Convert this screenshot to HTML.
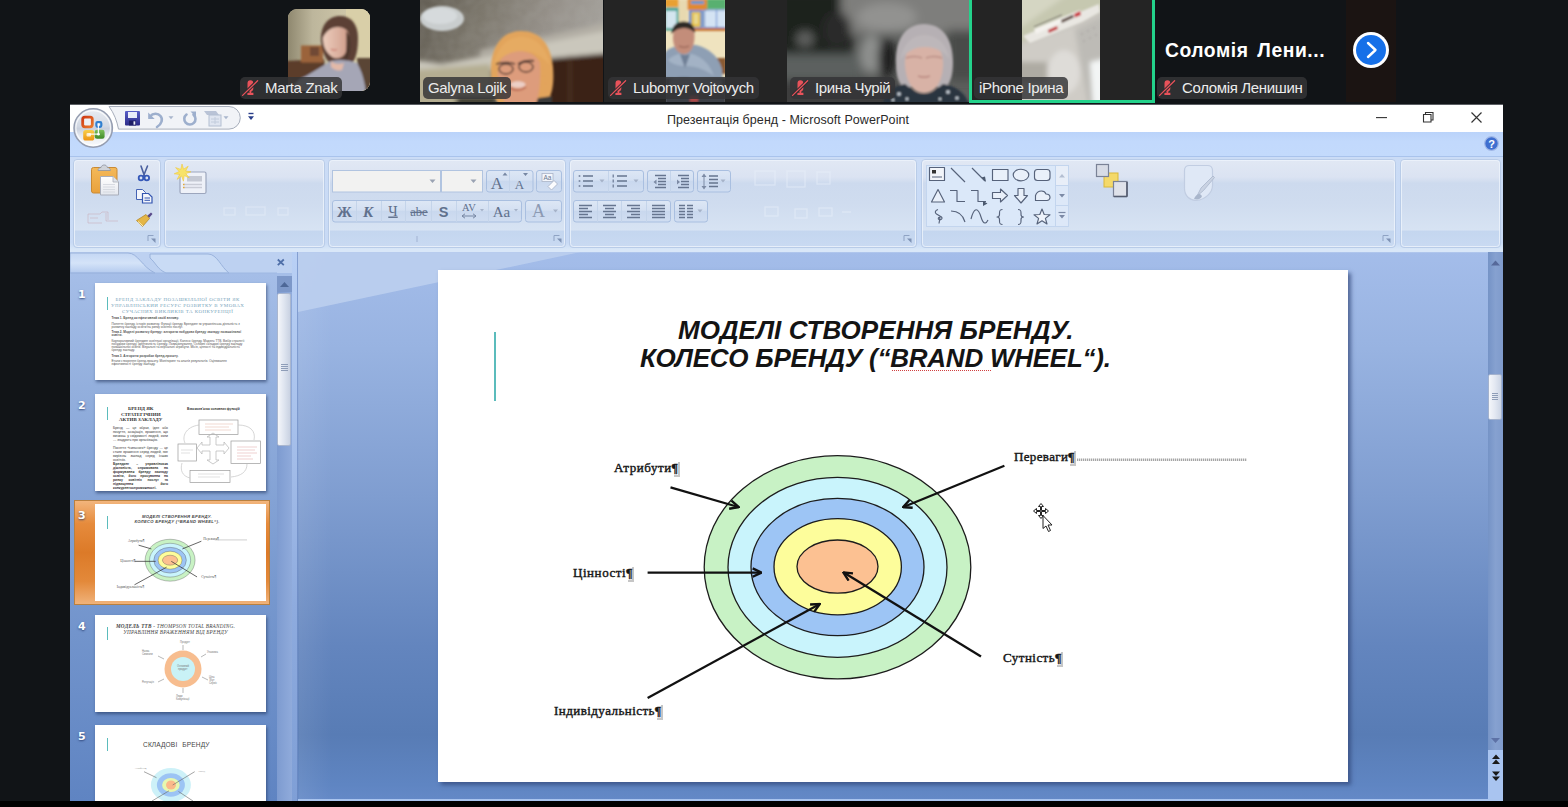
<!DOCTYPE html>
<html lang="uk">
<head>
<meta charset="utf-8">
<title>Презентація бренд - Microsoft PowerPoint</title>
<style>
*{box-sizing:border-box;margin:0;padding:0}
html,body{width:1568px;height:807px;overflow:hidden;background:#111417;font-family:"Liberation Sans","DejaVu Sans",sans-serif}
#root{position:relative;width:1568px;height:807px;overflow:hidden;background:#111417}
.abs{position:absolute}
/* ---------- zoom strip ---------- */
.tile{position:absolute;top:0;height:102px;overflow:hidden}
.lbl{position:absolute;height:22px;border-radius:5px;background:rgba(52,52,55,.84);color:#ececec;font-size:15px;line-height:22px;white-space:nowrap;padding:0 5px;font-family:"Liberation Sans",sans-serif;letter-spacing:-.35px}
.lbl svg{position:absolute;left:4px;top:2.700px;overflow:visible}
.lbl.m{padding-left:25px}
/* ---------- ppt window ---------- */
#ppt{position:absolute;left:70px;top:104px;width:1433px;height:697px;background:#bfd7f8;overflow:hidden}
#titlebar{position:absolute;left:0;top:0;width:100%;height:27.600px;background:#fff;border-top:1px solid #5b5e63}
#title{position:absolute;left:597px;top:8px;font-size:12.5px;line-height:14px;color:#2a2a2a;white-space:nowrap;letter-spacing:.07px}
#tabrow{position:absolute;left:0;top:27.600px;width:100%;height:25.400px;background:linear-gradient(#bad3fa,#c2d9fc 40%,#c3dafc);border-bottom:1px solid #a9c3ec}
#ribbon{position:absolute;left:0;top:53px;width:100%;height:95px;background:linear-gradient(#cbdcf6,#c8daf5 90%,#d6e5f7 96%,#dfebf9 100%)}
.grp{position:absolute;top:4px;height:87px;border:1px solid #b4c9e6;border-radius:4px;background:linear-gradient(#dbe7f7 0%,#d3e1f4 74%,#c1d6f2 76%,#c3d8f3 100%);box-shadow:0 0 0 1px rgba(255,255,255,.55) inset}

#work{position:absolute;left:0;top:146px;width:100%;height:551px;background:linear-gradient(90deg,rgba(255,255,255,0) 228px,rgba(255,255,255,.08) 229px,rgba(255,255,255,0) 262px),linear-gradient(#a4bdea 0%,#98b3e1 18%,#7f9dd0 45%,#6385be 72%,#587cb5 88%,#5f85c2 97%,#6489c7 100%);overflow:hidden}
#panel{position:absolute;left:0;top:0;width:222px;height:551px;background:linear-gradient(#a9c1ea 0%,#93afdd 25%,#7899cf 60%,#5f84c2 100%)}
.th{position:absolute;left:25px;width:170.500px;height:97px;background:#fff;box-shadow:1px 2px 3px rgba(30,50,90,.6);overflow:hidden}
.num{position:absolute;left:8px;width:14px;margin-top:-1px;color:#fff;font-weight:bold;font-size:11px;text-shadow:0 1px 2px rgba(30,50,100,.8);font-family:"DejaVu Sans","Liberation Sans",sans-serif}
.tt{position:absolute;white-space:nowrap;font-family:"Liberation Sans",sans-serif;transform-origin:0 0}
#slide{position:absolute;left:368px;top:166px;width:910px;height:512px;background:#fff;box-shadow:3px 3px 4px rgba(50,70,120,.7)}
.lab{position:absolute;font-family:"Liberation Serif",serif;font-size:13px;line-height:16px;color:#161616;white-space:nowrap;-webkit-text-stroke:.42px #161616;margin-top:.600px}
.lab i{font-style:normal;letter-spacing:0;box-shadow:2px 2px 0 -0px #c6c6c6}
.t1{position:absolute;white-space:nowrap;font-family:"Liberation Sans",sans-serif;font-weight:bold;font-style:italic;font-size:26px;line-height:30px;color:#141414}
.p1 p{margin:0 0 2px 0}
</style>
</head>
<body>
<div id="root">

<!-- ================= ZOOM VIDEO STRIP ================= -->
<div id="strip">
<svg width="0" height="0" style="position:absolute"><defs>
<filter id="b1" x="-20%" y="-20%" width="140%" height="140%"><feGaussianBlur stdDeviation="1.2"/></filter>
<filter id="b2" x="-20%" y="-20%" width="140%" height="140%"><feGaussianBlur stdDeviation="2.5"/></filter>
<filter id="b4" x="-20%" y="-20%" width="140%" height="140%"><feGaussianBlur stdDeviation="5"/></filter>
<symbol id="mic" viewBox="0 0 16 16" overflow="visible"><path d="M3.500 3.200a2.900 2.900 0 0 1 5.800 0v5.300c0 1.700-1.100 2.700-2.100 3v1.300h2.200v2.100h-6v-2.100h2.200v-1.300c-1-.3-2.100-1.300-2.100-3z" fill="#e8525a"/><path d="M13.600 .800-1.400 15.400" stroke="#2d2d30" stroke-width="3.200"/><path d="M13.600 .800-1.400 15.400" stroke="#e8525a" stroke-width="1.300" stroke-linecap="round"/></symbol>
</defs></svg>

<!-- tile 1 : Marta Znak (avatar) -->
<div class="abs" style="left:288px;top:9px;width:82px;height:82px;border-radius:9px;overflow:hidden;background:#c5bea3">
<svg width="82" height="82" viewBox="0 0 82 82">
 <defs><linearGradient id="w1" x1="0" y1="0" x2="1" y2="0"><stop offset="0" stop-color="#8f886f"/><stop offset=".3" stop-color="#bdb69c"/><stop offset=".7" stop-color="#cdc5a8"/><stop offset="1" stop-color="#d8cea8"/></linearGradient>
 <linearGradient id="sk1" x1="0" y1="0" x2="1" y2="0"><stop offset="0" stop-color="#eccdbd"/><stop offset="1" stop-color="#cf9c8a"/></linearGradient></defs>
 <rect width="82" height="82" fill="url(#w1)"/>
 <rect x="58" y="0" width="24" height="60" fill="#d9cfa8"/>
 <g filter="url(#b1)">
 <path d="M-2 52L36 50 40 84H-2z" fill="#5b3d2b"/>
 <rect x="13" y="36.500" width="22" height="17" fill="#9b633a"/>
 <rect x="22" y="38" width="9" height="9" fill="#6f4a36"/>
 <path d="M69 49h15v35H72z" fill="#5a4535"/>
 <path d="M33 32c-1-15 7-25 19-25 11 0 18 8 18 22 0 12-2 22-7 26-6 3-14 2-20 0-6-5-9-13-10-23z" fill="#5b4136"/>
 <path d="M35 30c0-8 5-14 13-15 7 0 13 5 13 14 0 8-2 14-6 18-4 3-9 3-12 0-5-4-8-10-8-17z" fill="url(#sk1)"/>
 <path d="M34 30c1-10 7-17 16-17 8 0 13 5 14 14-4-6-9-9-14-9-7 0-12 4-16 12z" fill="#5b4136"/>
 <path d="M58 22c4 4 5 12 4 20-1 6-3 10-6 12 2-8 3-18 2-32z" fill="#4e372e"/>
 <path d="M3 84c3-10 8-14 15-17l25-15c8-2 18-1 26 2 5 8 8 20 9 30z" fill="#a5a6b6"/>
 <path d="M43 52c3 3 8 4 13 2l-2 7c-4 1-8 0-11-3z" fill="#e2b9a8"/>
 <path d="M43 40c2 1.500 4 1.500 6 .500" stroke="#c9776a" stroke-width="1.200" fill="none"/>
 </g>
</svg></div>
<div class="lbl m" style="left:240px;top:77.400px"><svg width="16" height="16"><use href="#mic"/></svg>Marta Znak</div>

<!-- tile 2 : Galyna Lojik -->
<div class="tile" style="left:420px;width:183px;background:#8a857c">
<svg width="183" height="102" viewBox="0 0 183 102">
 <defs><linearGradient id="c2" x1="0" y1="0" x2="1" y2=".25"><stop offset="0" stop-color="#625d53"/><stop offset=".35" stop-color="#7d786d"/><stop offset=".7" stop-color="#96918a"/><stop offset="1" stop-color="#a5a29c"/></linearGradient>
 <filter id="tx" x="0" y="0" width="100%" height="100%"><feTurbulence type="fractalNoise" baseFrequency=".09" numOctaves="2" seed="3"/><feColorMatrix values="0 0 0 0 .5  0 0 0 0 .5  0 0 0 0 .48  .9 0 0 0 -.28"/></filter></defs>
 <rect width="183" height="102" fill="url(#c2)"/>
 <rect width="183" height="70" filter="url(#tx)" opacity=".28"/>
 <g filter="url(#b2)">
 <path d="M-5 60 L22 64 L70 55 L190 25 L190 55 L120 60 L60 72 L-5 74z" fill="#cac7bc"/>
 <path d="M60 50 L190 22 L190 30 L60 56z" fill="#b3afa5"/>
 <path d="M-5 70 L70 64 L75 110 L-5 110z" fill="#b4ad91"/>
 <path d="M122 59 L190 53 L190 110 L122 110z" fill="#3a2417"/>
 <path d="M150 56v50" stroke="#4d3322" stroke-width="3"/>
 <rect x="36" y="97" width="40" height="8" fill="#1d1a18"/>
 </g>
 <g filter="url(#b1)">
 <ellipse cx="22" cy="18.500" rx="22" ry="12.500" fill="#c9cdce"/>
 <ellipse cx="20" cy="16" rx="17" ry="8" fill="#d6dadc"/>
 <path d="M71 74c-1-26 10-43 30-43 19 0 30 13 32 36 1 14 0 26-5 33l-8 6H80c-6-8-9-18-9-32z" fill="#e2a45c"/>
 <path d="M78 68c1-10 8-16 20-17 13 0 22 6 24 18 1 12-1 24-7 36H86c-6-10-9-24-8-37z" fill="#dd9c7b"/>
 <path d="M73 66c4-18 14-29 28-29 14 0 25 9 29 28-8-9-17-14-28-14-11 0-21 5-29 15z" fill="#e6ab62"/>
 <path d="M120 62c5 8 7 22 5 36l-8 4c3-12 4-26 3-40z" fill="#e2a45c"/>
 <path d="M76 64c8-2 14-2 19 0M98 64c5-3 10-4 16-3" stroke="#4d3732" stroke-width="1.800" fill="none"/>
 <ellipse cx="86" cy="69" rx="7" ry="5" fill="none" stroke="#4d3732" stroke-width="1.400"/><ellipse cx="106" cy="67" rx="7" ry="5" fill="none" stroke="#4d3732" stroke-width="1.400"/>
 <ellipse cx="98" cy="84.500" rx="7.500" ry="3.200" fill="#eccfc6"/>
 <path d="M90 88c5 3 11 3 16-1" stroke="#b4604e" stroke-width="1.600" fill="none"/>
 <path d="M118 98l14-2v8h-16z" fill="#3a3a3a"/>
 </g>
</svg></div>
<div class="lbl" style="left:423px;top:77.400px">Galyna Lojik</div>

<!-- tile 3 : Lubomyr Vojtovych -->
<div class="tile" style="left:604px;width:183px;background:#242424">
<svg class="abs" style="left:62px;top:0" width="59" height="102" viewBox="0 0 59 102">
 <rect width="59" height="102" fill="#efe3bf"/>
 <g filter="url(#b1)">
 <rect x="12.500" y="0" width="9" height="32" fill="#e8d9b0"/>
 <rect x="-1" y="-1" width="13.500" height="8" fill="#e8a030"/>
 <rect x="-1" y="7.500" width="13.500" height="23" fill="#4aa69a"/><rect x="0" y="11" width="10.500" height="17" fill="#d3e5ee"/>
 <rect x="21.500" y="-1" width="20" height="11" fill="#e08a30"/><rect x="25" y="1" width="13" height="3" fill="#5a9ad0"/>
 <rect x="23" y="10" width="14" height="20" fill="#6a8ed0"/><rect x="25.500" y="12" width="9" height="15" fill="#e6c24a"/><rect x="28" y="14" width="4" height="10" fill="#e8d890"/>
 <rect x="41" y="-1" width="19" height="10" fill="#58b070"/>
 <rect x="37.700" y="9.500" width="22" height="19" fill="#4a80d0"/><rect x="39" y="10.500" width="11" height="16.500" fill="#d4e3f3"/><rect x="51" y="10.500" width="9" height="16.500" fill="#d4e3f3"/>
 <rect x="21" y="28" width="40" height="3" fill="#c8793a"/>
 <rect x="50" y="58" width="10" height="16" fill="#8a5a30"/>
 <path d="M-2 104V54c3-5 8-7 14-8l6-1h12c12 3 22 10 26 24l2 35z" fill="#8e9fb4"/>
 <path d="M2 60c6-6 14-8 24-6 10 3 18 10 22 22-8-6-18-10-28-10-8 0-14-2-18-6z" fill="#a3b2c5"/>
 <path d="M7 38c0-10 4-16 11-16s11 6 10.500 16c-.5 9-4 16-10.500 16s-11-7-11-16z" fill="#c38d7a"/>
 <path d="M5.500 34c0-8 5-12.500 12-12.500s11.500 4 11.500 11.500c-3-3.500-7-5-11.500-5s-9 2-12 6z" fill="#2f2a26"/>
 <path d="M14 54l5 14 5-14c-3 1-7 1-10 0z" fill="#6f7f95"/>
 <path d="M13 46c3 1.500 7 1.500 10 0" stroke="#8d5a4e" stroke-width="1.200" fill="none"/>
 <rect x="-1" y="78" width="61" height="26" fill="#3d4046"/>
 <path d="M4 80c6-3 14-4 22-2l30 2v6H4z" fill="#6a788a"/>
 <rect x="24" y="96" width="8" height="6" fill="#b04a48"/>
 </g>
</svg></div>
<div class="lbl m" style="left:608px;top:77.400px"><svg width="16" height="16"><use href="#mic"/></svg>Lubomyr Vojtovych</div>

<!-- tile 4 : Ірина Чурій -->
<div class="tile" style="left:787px;width:183px;background:#4a4b49">
<svg width="183" height="102" viewBox="0 0 183 102">
 <rect width="183" height="102" fill="#5c5e5c"/>
 <g filter="url(#b4)">
 <rect x="-10" y="-10" width="76" height="66" fill="#1f211f"/>
 <rect x="54" y="-10" width="140" height="44" fill="#7e7e7c"/>
 <ellipse cx="100" cy="17" rx="30" ry="14" fill="#929290"/>
 <ellipse cx="18" cy="39" rx="9" ry="8" fill="#5e605e"/>
 <rect x="-10" y="54" width="84" height="26" fill="#5c605e"/>
 <ellipse cx="84" cy="54" rx="11" ry="19" fill="#8e908e"/>
 <ellipse cx="100" cy="58" rx="9" ry="20" fill="#1c1e1c"/>
 <rect x="160" y="30" width="30" height="50" fill="#4a4c48"/>
 <rect x="-10" y="80" width="120" height="30" fill="#3c3e3c"/>
 <ellipse cx="50" cy="30" rx="14" ry="18" fill="#2a2c2a"/>
 </g>
 <g filter="url(#b1)">
 <path d="M109 64c-1-24 9-40 28-40 18 0 29 14 29 38 0 12-2 20-7 25h-43c-5-5-7-13-7-23z" fill="#b6b0b4"/>
 <path d="M118 62c0-12 7-20 19-20 11 0 19 7 19 21 0 16-6 30-19 30s-19-15-19-31z" fill="#d8b2a6"/>
 <path d="M113 60c3-16 12-25 24-25 13 0 22 8 26 24-7-8-15-12-25-12-10 0-18 4-25 13z" fill="#bdb7ba"/>
 <path d="M119 58c6-2 11-2 16 0M139 58c5-2 10-2 16 0" stroke="#b98d84" stroke-width="1.600" fill="none"/>
 <path d="M131 76c4 1.500 8 1.500 12 0" stroke="#b07a74" stroke-width="1.300" fill="none"/>
 <path d="M96 104c2-12 10-18 22-20l10 8c6 3 12 3 18 0l10-8c12 2 22 8 26 20z" fill="#2a3440"/>
 <g fill="#d5dde4"><circle cx="112" cy="94" r="1.800"/><circle cx="120" cy="99" r="1.400"/><circle cx="161" cy="92" r="1.800"/><circle cx="170" cy="98" r="1.600"/><circle cx="153" cy="99" r="1.300"/><circle cx="106" cy="100" r="1.300"/></g>
 </g>
</svg></div>
<div class="lbl m" style="left:790px;top:77.400px"><svg width="16" height="16"><use href="#mic"/></svg>Ірина Чурій</div>

<!-- tile 5 : iPhone Ірина (active speaker) -->
<div class="tile" style="left:969px;width:186px;background:#242424;border:3.500px solid #23d28b;border-top-width:0;height:103px">
<svg class="abs" style="left:49.800px;top:0" width="78" height="100" viewBox="0 0 78 100">
 <rect width="78" height="100" fill="#c9c6c0"/>
 <g filter="url(#b2)">
 <path d="M-5 -5h90v12L-5 44z" fill="#c6c8b0"/>
 <path d="M-5 -5h50L-5 30z" fill="#d5d6c3"/>
 <path d="M50 32 L85 14 L85 105 L66 105z" fill="#bdbbb6"/>
 <path d="M-5 46 L52 26 L66 105 L-5 105z" fill="#cfccc6"/>
 <ellipse cx="42" cy="72" rx="16" ry="22" fill="#dedcd8"/>
 <path d="M-5 62h30v20H-5z" fill="#aeaba3"/>
 <path d="M68 62l17-4v50H71z" fill="#f3f5f5"/>
 </g>
 <g filter="url(#b1)">
 <path d="M1 36 L77 4 L78 12 L60 22 L8 43z" fill="#e9e7e2"/>
 <path d="M12 29 L58 10 L59 14 L14 34z" fill="#f4f2ee"/>
 <path d="M26 30l9-4 .800 3-9 4z" fill="#c23038"/><path d="M52 14l6-3 1 4-6 2.500z" fill="#c8303a"/>
 <path d="M39 20l12-5.500 .800 3-12 5.500z" fill="#5d4a40"/>
 <path d="M12 27l28-12" stroke="#6a6660" stroke-width="1"/>
 <g fill="#aaa8a4"><circle cx="60" cy="34" r=".9"/><circle cx="66" cy="31" r=".9"/><circle cx="72" cy="28" r=".9"/><circle cx="62" cy="41" r=".9"/><circle cx="68" cy="38" r=".9"/><circle cx="74" cy="35" r=".9"/></g>
 </g>
</svg></div>
<div class="lbl" style="left:974px;top:77.400px">iPhone Ірина</div>

<!-- tile 6 : Соломія Ленишин (no video) -->
<div class="abs" style="left:1165px;top:37.500px;width:180px;height:26px;color:#fff;font-weight:bold;font-size:19.3px;line-height:26px;white-space:nowrap;font-family:'Liberation Sans',sans-serif;letter-spacing:.55px;word-spacing:3px">Соломія Лени...</div>
<div class="lbl m" style="left:1157px;top:77.400px"><svg width="16" height="16"><use href="#mic"/></svg>Соломія Ленишин</div>
<div class="abs" style="left:1346px;top:0;width:50px;height:102px;background:#1b1412"></div>
<div class="abs" style="left:1353px;top:32px;width:36px;height:36px;border-radius:50%;background:#fff"></div>
<div class="abs" style="left:1356px;top:35px;width:30px;height:30px;border-radius:50%;background:#1670e8"></div>
<svg class="abs" style="left:1356px;top:35px" width="30" height="30" viewBox="0 0 30 30"><path d="M12 8l7.5 7-7.5 7" fill="none" stroke="#fff" stroke-width="2.4" stroke-linecap="round" stroke-linejoin="round"/></svg>
</div>

<!-- ================= POWERPOINT ================= -->
<div id="ppt">
  <div id="titlebar"><div id="title">Презентація бренд - Microsoft PowerPoint</div></div>
  <div id="tabrow"></div>
  <div id="ribbon"></div>
  <div id="work">
    <!-- diagonal light wedge at top of workspace -->
    <svg class="abs" style="left:0;top:0" width="1433" height="120" viewBox="0 0 1433 120"><path d="M228 0H520L228 62z" fill="#bdd0ef" opacity=".85"/><path d="M228 0h1205v3H228z" fill="#b7cbee" opacity=".6"/></svg>
    <!-- ===== slide thumbnails panel ===== -->
    <div id="panel">
      <svg class="abs" style="left:0;top:0" width="222" height="30" viewBox="0 0 222 30">
        <defs><linearGradient id="tb1" x1="0" y1="0" x2="0" y2="1"><stop offset="0" stop-color="#c4d7f4"/><stop offset=".5" stop-color="#d4e3f8"/><stop offset="1" stop-color="#b4caee"/></linearGradient></defs>
        <rect x="0" y="0" width="222" height="23" fill="#bdd1f1"/>
        <path d="M0 3h58c10 0 14 14 27 20H0z" fill="url(#tb1)" stroke="#8fa9d6" stroke-width=".8"/>
        <path d="M80 4h58c9 0 13 13 21 19H96c-9-4-10-10-16-15z" fill="#c9dbf5" stroke="#8fa9d6" stroke-width=".8"/>
        <path d="M0 23h207" stroke="#9fb8e2" stroke-width="1"/>
        <path d="M207.800 9.500l6 5.600M213.800 9.500l-6 5.600" stroke="#4f6fa8" stroke-width="1.800"/>
      </svg>
      <!-- panel scrollbar -->
      <div class="abs" style="left:207px;top:26px;width:15px;height:525px;background:linear-gradient(90deg,#7d9bd0,#90abdb)"></div>
      <div class="abs" style="left:207px;top:26px;width:15px;height:16px;background:#7d98c9"></div>
      <svg class="abs" style="left:207px;top:26px" width="15" height="16"><path d="M3 11h9l-4.500-5z" fill="#4d6797"/></svg>
      <div class="abs" style="left:207px;top:43px;width:14px;height:153px;border-radius:2px;background:linear-gradient(90deg,#f4f6fa,#dfe5f0 50%,#c9d2e2);border:1px solid #a9b6cf"></div>
      <svg class="abs" style="left:208px;top:113px" width="13" height="10"><path d="M3 1.500h7M3 3.500h7M3 5.500h7M3 7.500h7" stroke="#8e9db8" stroke-width="1"/></svg>

      <div class="num" style="top:39px">1</div>
      <div class="th" style="top:33px">
        <div class="abs" style="left:12px;top:14px;width:1px;height:13px;background:#5bbcbc"></div>
        <div class="tt" style="left:16px;top:14px;font-size:5px;line-height:6px;color:#7aa6bc;letter-spacing:.45px;text-align:center;font-family:'Liberation Serif',serif">БРЕНД ЗАКЛАДУ ПОЗАШКІЛЬНОЇ ОСВІТИ ЯК<br>УПРАВЛІНСЬКИЙ РЕСУРС РОЗВИТКУ В УМОВАХ<br>СУЧАСНИХ ВИКЛИКІВ ТА КОНКУРЕНЦІЇ</div>
        <div class="tt p1" style="left:16.500px;top:34.300px;font-size:3.150px;line-height:3.250px;color:#555;width:133px;white-space:normal;font-family:'Liberation Sans',sans-serif"><p><b>Тема 1. Бренд як ефективний засіб впливу.</b></p><p>Поняття бренду, історія розвитку. Функції бренду. Брендинг як управлінська діяльність з розвитку закладу освіти на ринку освітніх послуг.</p><p><b>Тема 2. Моделі розвитку бренду: алгоритм побудови бренду закладу позашкільної освіти.</b></p><p>Корпоративний брендинг освітньої організації. Колесо бренду. Модель ТТВ. Вибір стратегії побудови бренду. Ідентичність бренду. Позиціонування. Основні складові бренду закладу позашкільної освіти. Візуальні та вербальні атрибути. Місія, цінності та індивідуальність бренду закладу.</p><p><b>Тема 3. Алгоритм розробки бренд-проєкту.</b></p><p>Етапи створення бренд-проєкту. Моніторинг та аналіз результатів. Оцінювання ефективності бренду закладу.</p></div>
      </div>

      <div class="num" style="top:150px">2</div>
      <div class="th" style="top:144px">
        <div class="abs" style="left:12px;top:13px;width:1px;height:13px;background:#5bbcbc"></div>
        <div class="tt" style="left:24px;top:12px;font-size:5px;line-height:5.500px;color:#333;font-weight:bold;text-align:center;font-family:'Liberation Serif',serif">БРЕНД ЯК<br>СТРАТЕГІЧНИЙ<br>АКТИВ ЗАКЛАДУ</div>
        <div class="tt" style="left:92px;top:13px;font-size:3.200px;color:#333;font-weight:bold">Взаємозв’язок основних функцій</div>
        <div class="tt" style="left:18px;top:32px;font-size:3.400px;line-height:4px;color:#333;width:55px;white-space:normal;text-align:justify">Бренд — це образ, ідея або почуття, асоціація, враження, що виникає у свідомості людей, коли … згадують про організацію.<br><br>Поняття «сильного» бренду … це стале враження серед людей, яке вирізняє заклад серед інших освітніх.<br><b>Брендинг – управлінська діяльність, спрямована на формування бренду закладу освіти, його просування на ринку освітніх послуг та підвищення його конкурентоспроможності.</b></div>
        <svg class="abs" style="left:0;top:0" width="171" height="97" viewBox="0 0 171 97" fill="none" stroke="#9a9a9a" stroke-width=".7">
          <rect x="104" y="26" width="39" height="14.500" fill="#fff"/><rect x="83" y="50" width="18.500" height="17" fill="#fff"/><rect x="136" y="47" width="29.500" height="22.500" fill="#fff"/><rect x="95" y="76.500" width="40" height="12" fill="#fff"/>
          <path d="M112 43l6-4 6 4h-3v8h8v-3l5 6-5 6v-3h-8v9h3l-6 4-6-4h3v-9h-8v3l-5-6 5-6v3h8v-8z" stroke="#b5b5b5"/>
          <path d="M104 31c-14 2-17 12-14 18M143 31c12 0 18 6 16 15M152 70c0 8-6 12-16 13M95 84c-8-2-10-8-8-15" stroke="#c4c4c4"/>
          <path d="M110 30h28M110 33h24M110 36h26" stroke="#e0b0a0" stroke-width=".5"/><path d="M142 53h20M142 56h18M142 59h20M142 62h14M142 65h16" stroke="#dca0a0" stroke-width=".5"/><path d="M103 80h26M103 83h22" stroke="#c0c0c0" stroke-width=".5"/><path d="M86 56h12M86 59h9" stroke="#c0c0c0" stroke-width=".5"/>
        </svg>
      </div>

      <!-- selected thumbnail #3 -->
      <div class="abs" style="left:4px;top:250px;width:196px;height:105px;border:1px solid #b9803f;background:linear-gradient(#f2b57c 0%,#e68b3c 22%,#dc7a28 50%,#e3893a 78%,#f0b27a 100%)"></div>
      <div class="num" style="top:260px">3</div>
      <div class="th" style="top:254px;box-shadow:none">
        <div class="abs" style="left:12px;top:12px;width:1px;height:13px;background:#5bbcbc"></div>
        <div class="tt" style="left:39.500px;top:9.800px;font-size:4.150px;line-height:5.400px;color:#444;font-weight:bold;font-style:italic;text-align:center;letter-spacing:.3px">МОДЕЛІ СТВОРЕННЯ БРЕНДУ.<br>КОЛЕСО БРЕНДУ (“BRAND WHEEL“).</div>
        <svg class="abs" style="left:0;top:0" width="171" height="97" viewBox="438 270 910 512">
          <g stroke="#555" stroke-width="2"><ellipse cx="837.500" cy="567" rx="133" ry="111.500" fill="#c8f2c4"/><ellipse cx="837.500" cy="567" rx="109.500" ry="90" fill="#c9f4fc"/><ellipse cx="837.500" cy="567" rx="86.500" ry="68.500" fill="#9cc4f4"/><ellipse cx="837.500" cy="567" rx="63.500" ry="48" fill="#fdfd9a"/><ellipse cx="837.500" cy="567" rx="40.500" ry="26.500" fill="#fcc090"/></g>
          <g stroke="#333" stroke-width="4"><path d="M670 487l68 20M648 573h113M648 698l171-94M1004 466l-101 41M981 656l-137-83"/></g>
          <path d="M1075 459h172" stroke="#aaa" stroke-width="3"/>
          <g fill="#555" font-family="Liberation Serif, serif" font-size="19"><text x="614" y="472">Атрибути¶</text><text x="1014" y="461">Переваги¶</text><text x="573" y="577">Цінності¶</text><text x="1003" y="662">Сутність¶</text><text x="554" y="715">Індивідуальність¶</text></g>
        </svg>
      </div>

      <div class="num" style="top:371px">4</div>
      <div class="th" style="top:365px">
        <div class="abs" style="left:12px;top:12px;width:1px;height:13px;background:#5bbcbc"></div>
        <div class="tt" style="left:21px;top:9px;font-size:5.200px;line-height:5.600px;color:#444;font-style:italic;text-align:center;letter-spacing:.25px;font-family:'Liberation Serif',serif"><b>МОДЕЛЬ ТТВ</b> - THOMPSON TOTAL BRANDING.<br>УПРАВЛІННЯ ВРАЖЕННЯМ ВІД БРЕНДУ</div>
        <svg class="abs" style="left:45px;top:21px" width="90" height="68" viewBox="0 0 90 68">
          <circle cx="43" cy="33" r="18.500" fill="#f7bd8f"/><circle cx="43" cy="33" r="12" fill="#c9f2f6"/>
          <g stroke="#888" stroke-width=".6"><path d="M43 9v5M66 18l-5 3M68 44l-6-3M43 57v-5M18 46l6-3M18 20l6 3"/></g>
          <g fill="#777" font-family="Liberation Sans, sans-serif" font-size="2.600"><text x="40" y="7">Продукт</text><text x="67" y="17">Упаковка</text><text x="69" y="42">Ціна</text><text x="69" y="45">Збут</text><text x="69" y="48">Сервіс</text><text x="36" y="61">Люди</text><text x="36" y="64">Комунікації</text><text x="2" y="47">Репутація</text><text x="2" y="16">Назва</text><text x="2" y="19">Символи</text><text x="37" y="31">Основний</text><text x="38" y="34">продукт</text></g>
        </svg>
      </div>

      <div class="num" style="top:481px">5</div>
      <div class="th" style="top:475px">
        <div class="abs" style="left:11.500px;top:12.500px;width:1px;height:13.500px;background:#5bbcbc"></div>
        <div class="tt" style="left:48px;top:15.500px;font-size:6.600px;line-height:8px;color:#444;letter-spacing:.12px;word-spacing:3px">СКЛАДОВІ БРЕНДУ</div>
        <svg class="abs" style="left:0;top:0" width="171" height="97" viewBox="0 0 171 97">
          <ellipse cx="75.900" cy="60" rx="20" ry="17" fill="#cdf1f8"/><ellipse cx="75.900" cy="60" rx="14" ry="11.700" fill="#9cc4f4"/><ellipse cx="75.900" cy="60" rx="8.800" ry="7" fill="#e6f8b0"/><ellipse cx="76" cy="60" rx="5" ry="4.600" fill="#fbb98a"/>
          <g stroke="#666" stroke-width=".6"><path d="M49 46.700l12.500 6M99.700 46.700l-22 13.300M57 76l17-10.200M98 76l-14.500-9.500"/></g>
          <g fill="#888" font-family="Liberation Serif, serif" font-size="2.600"><text x="39.500" y="43.500">Атрибути¶</text><text x="103.400" y="46.500">Бренд</text></g>
        </svg>
      </div>
    </div>
    <!-- splitter -->
    <div class="abs" style="left:222px;top:2px;width:6px;height:549px;background:linear-gradient(#b9d0f5 0%,#a9c2ec 30%,#8eabde 65%,#7f9fd6 100%);border-right:1px solid rgba(90,120,180,.55)"></div>

    <!-- ===== main slide ===== -->
    <div id="slide" style="top:20px">
      <div class="abs" style="left:56px;top:62px;width:2px;height:69px;background:#5bbcbc"></div>
      <div class="t1" style="left:240px;top:45px;letter-spacing:.05px">МОДЕЛІ СТВОРЕННЯ БРЕНДУ.</div>
      <div class="t1" style="left:202px;top:73px;letter-spacing:-.24px">КОЛЕСО БРЕНДУ (“BRAND WHEEL“).</div>
      <div class="abs" style="left:454px;top:100px;width:99px;height:0;border-top:1px dotted #d04040"></div>
      <svg class="abs" style="left:0;top:0" width="910" height="512" viewBox="438 270 910 512">
        <g stroke="#1c1c1c" stroke-width="1.300">
          <ellipse cx="837.500" cy="567.300" rx="133.300" ry="111.600" fill="#c8f2c5"/>
          <ellipse cx="837.500" cy="567.300" rx="109.500" ry="90" fill="#c9f4fc"/>
          <ellipse cx="837.500" cy="567" rx="86.500" ry="68.700" fill="#9dc5f5"/>
          <ellipse cx="837.700" cy="566.800" rx="63.700" ry="48.100" fill="#fdfd9b"/>
          <ellipse cx="837.500" cy="566.600" rx="40.500" ry="26.600" fill="#fcc192"/>
        </g>
        <defs><marker id="ah" viewBox="0 0 12 12" refX="10.500" refY="6" markerWidth="10.500" markerHeight="10.500" orient="auto-start-reverse" markerUnits="userSpaceOnUse"><path d="M1 1.200L11 6L1 10.800" fill="none" stroke="#111" stroke-width="2.700" stroke-linejoin="miter"/></marker></defs>
        <g stroke="#111" stroke-width="2.300" fill="none" marker-end="url(#ah)">
          <path d="M670.500 487.400L738.300 507"/>
          <path d="M647.600 572.600H761"/>
          <path d="M647.600 698L819.400 604.200"/>
          <path d="M1004.400 465.800L903.400 507"/>
          <path d="M981 656.500L843.700 572.600"/>
        </g>
        <path d="M1077 459.700h170" stroke="#a6a6a6" stroke-width="2.400" stroke-dasharray="1.300 .700"/>
        <!-- mouse cursor (move) -->
        <g stroke="#222" stroke-width="1" fill="#fff"><path d="M1041 503.500l2.500 3h-2v4h4v-2l3 2.500-3 2.500v-2h-4v4h2l-2.500 3-2.500-3h2v-4h-4v2l-3-2.500 3-2.500v2h4v-4h-2z"/><path d="M1043 515.500v13l3-2.500 2.500 5.500 2-1-2.500-5.500h4z"/></g>
      </svg>
      <div class="lab" style="left:176px;top:189px;letter-spacing:0.546px">Атрибути<i>¶</i></div>
      <div class="lab" style="left:576px;top:178px;letter-spacing:0.349px">Переваги<i>¶</i></div>
      <div class="lab" style="left:135px;top:294px;letter-spacing:0.555px">Цінності<i>¶</i></div>
      <div class="lab" style="left:565px;top:379px;letter-spacing:0.458px">Сутність<i>¶</i></div>
      <div class="lab" style="left:116px;top:432px;letter-spacing:0.447px">Індивідуальність<i>¶</i></div>
    </div>

    <!-- ===== main vertical scrollbar ===== -->
    <div class="abs" style="left:1418px;top:2px;width:15px;height:498px;background:linear-gradient(90deg,#7593c6,#86a1d0 50%,#7f9bcc)"></div>
    <svg class="abs" style="left:1418px;top:6px" width="15" height="12"><path d="M3 9.500h9l-4.500-5z" fill="#56699a"/></svg>
    <div class="abs" style="left:1418px;top:124px;width:14px;height:46px;border-radius:2px;background:linear-gradient(90deg,#f4f6fa,#e3e8f2 50%,#ccd5e5);border:1px solid #a3b2ce"></div>
    <svg class="abs" style="left:1418px;top:142px" width="14" height="10"><path d="M4 1.500h6M4 3.500h6M4 5.500h6M4 7.500h6" stroke="#8e9db8" stroke-width="1"/></svg>
    <svg class="abs" style="left:1418px;top:485px" width="15" height="12"><path d="M3 3h9l-4.500 5z" fill="#5d72a6"/></svg>
    <div class="abs" style="left:1418px;top:500px;width:15px;height:51px;background:#a9c4f0"></div>
    <svg class="abs" style="left:1418px;top:500px" width="15" height="51" viewBox="0 0 15 51"><path d="M4 9h8l-4-4.500zM4 14h8l-4-4.500zM4 21.500h8l-4 4.500zM4 26.500h8l-4 4.500z" fill="#1a1a1a"/></svg>
    <div class="abs" style="left:228px;top:549px;width:1205px;height:2px;background:#a9c4ee"></div>
    <div class="abs" style="left:0;top:0;width:1433px;height:2px;background:#d9e7f8"></div>
  </div>
  <!-- chrome overlay drawn in page coordinates -->
  <svg id="chrome" class="abs" style="left:-70px;top:-104px" width="1568" height="807" viewBox="0 0 1568 807">
   <defs>
    <radialGradient id="ob" cx=".45" cy=".3" r=".8"><stop offset="0" stop-color="#ffffff"/><stop offset=".55" stop-color="#e4e9f1"/><stop offset="1" stop-color="#b9c3d3"/></radialGradient>
    <linearGradient id="sv" x1="0" y1="0" x2="0" y2="1"><stop offset="0" stop-color="#5a5fc8"/><stop offset="1" stop-color="#2a2a88"/></linearGradient>
   </defs>

   <!-- ============ RIBBON ============ -->
   <defs>
    <linearGradient id="gf" x1="0" y1="0" x2="0" y2="1"><stop offset="0" stop-color="#e1e8f4"/><stop offset=".2" stop-color="#dbe3f2"/><stop offset=".27" stop-color="#cddaee"/><stop offset=".5" stop-color="#cfdcef"/><stop offset=".8" stop-color="#d7e3f3"/><stop offset=".815" stop-color="#c4d6ef"/><stop offset="1" stop-color="#c9daf2"/></linearGradient>
    <linearGradient id="bf" x1="0" y1="0" x2="0" y2="1"><stop offset="0" stop-color="#dde7f5"/><stop offset=".45" stop-color="#d4e0f2"/><stop offset=".5" stop-color="#c9d8ee"/><stop offset="1" stop-color="#d0ddf1"/></linearGradient>
    <linearGradient id="cb" x1="0" y1="0" x2="0" y2="1"><stop offset="0" stop-color="#f4b95a"/><stop offset="1" stop-color="#e9a13c"/></linearGradient>
    <linearGradient id="pp" x1="0" y1="0" x2="0" y2="1"><stop offset="0" stop-color="#ffffff"/><stop offset="1" stop-color="#e4e7ee"/></linearGradient>
   </defs>
   <g id="groups" fill="url(#gf)" stroke="#b9cce8" stroke-width="1">
    <rect x="73.500" y="159.500" width="87" height="88" rx="3.500"/>
    <rect x="164.500" y="159.500" width="160" height="88" rx="3.500"/>
    <rect x="328.500" y="159.500" width="237" height="88" rx="3.500"/>
    <rect x="569.500" y="159.500" width="347" height="88" rx="3.500"/>
    <rect x="921.500" y="159.500" width="474" height="88" rx="3.500"/>
    <rect x="1400.500" y="159.500" width="100" height="88" rx="3.500"/>
   </g>
   <g fill="none" stroke="#eef4fc" stroke-width="1" opacity=".8">
    <rect x="74.500" y="160.500" width="85" height="86" rx="3"/><rect x="165.500" y="160.500" width="158" height="86" rx="3"/><rect x="329.500" y="160.500" width="235" height="86" rx="3"/><rect x="570.500" y="160.500" width="345" height="86" rx="3"/><rect x="922.500" y="160.500" width="472" height="86" rx="3"/><rect x="1401.500" y="160.500" width="98" height="86" rx="3"/>
   </g>
   <!-- dialog launchers -->
   <g fill="none" stroke="#8fa3c4" stroke-width="1">
    <path d="M148 241v-5.500h5.500"/><path d="M554 241v-5.500h5.500"/><path d="M904 241v-5.500h5.500"/><path d="M1383 241v-5.500h5.500"/>
   </g>
   <g fill="#7f92b4"><path d="M151 238.500h4.500v4.500z"/><path d="M557 238.500h4.500v4.500z"/><path d="M907 238.500h4.500v4.500z"/><path d="M1386 238.500h4.500v4.500z"/></g>

   <!-- clipboard group -->
   <rect x="91.500" y="167.500" width="25.500" height="25.500" rx="2" fill="url(#cb)" stroke="#c98a34" stroke-width="1"/>
   <path d="M98 170.500c0-2 1.500-3 3-3 .5-1.800 1.800-2.500 3.200-2.500s2.700.7 3.200 2.500c1.500 0 3 1 3 3z" fill="#cfd3da" stroke="#8d93a0" stroke-width=".8"/>
   <path d="M100.500 176.500h12.500l5.500 5.500v13h-18z" fill="url(#pp)" stroke="#a9aeba" stroke-width="1"/>
   <path d="M113 176.500v5.500h5.500" fill="#dfe3ea" stroke="#a9aeba" stroke-width=".8"/>
   <path d="M103 184.500h12M103 187h12M103 189.500h12M103 192h12" stroke="#d0d4dc" stroke-width=".8"/>
   <!-- scissors -->
   <path d="M141 166l3.500 10M147.500 166l-4 10" stroke="#4a5f9e" stroke-width="1.600" stroke-linecap="round"/>
   <circle cx="141" cy="178" r="2.300" fill="none" stroke="#3558b8" stroke-width="1.800"/><circle cx="146.800" cy="178" r="2.300" fill="none" stroke="#3558b8" stroke-width="1.800"/>
   <!-- copy -->
   <path d="M136.500 189.500h6l3 3v7h-9z" fill="#f3f5fb" stroke="#4462b4" stroke-width="1"/>
   <path d="M142.500 193.500h6l3.500 3.500v6h-9.500z" fill="#f3f5fb" stroke="#3355b0" stroke-width="1.200"/>
   <path d="M144.500 198h5.500M144.500 200.300h5.500" stroke="#3355b0" stroke-width="1"/>
   <!-- format painter -->
   <path d="M147 216l4-3.500 1.500 1.500-3.500 4z" fill="#5a4a8a"/>
   <path d="M136.500 220.500l9.500-6 3.500 4-7 8z" fill="#e4b646" stroke="#b88a2a" stroke-width=".8"/>
   <path d="M138 221.500l5 4.500" stroke="#fff2c0" stroke-width="1"/>
   <!-- faint paste caption -->
   <g opacity=".5" fill="none" stroke="#c9a9b4" stroke-width="1"><path d="M88 214h12l2-2h6v8M88 214v9h14M106 213v8h12M90 218h8"/></g>

   <!-- slides group -->
   <rect x="180" y="172" width="26" height="21.500" rx="1.500" fill="#eef1f8" stroke="#9ca6bd" stroke-width="1.200"/>
   <rect x="187" y="176" width="15" height="5.500" fill="#c5c9d4"/><path d="M184 184.500h18M184 187.500h18" stroke="#c9ccd6" stroke-width="1.400"/><path d="M183 184.500h1.500M183 187.500h1.500" stroke="#e2a93a" stroke-width="1.400"/>
   <path d="M182 164l1.600 5.200 4.600-3-2.600 4.800 5.400.8-5.200 1.800 3.400 4.200-5-2.200-.8 5.600-1.800-5.200-4.400 3.400 2.400-5-5.400-.6 5-2.200-3.600-4 5.200 1.800z" fill="#f7e36a" stroke="#f2c93a" stroke-width=".6"/>
   <g opacity=".55" fill="none" stroke="#e6edf8" stroke-width="1.200"><rect x="224" y="208" width="11" height="7"/><rect x="246" y="207" width="19" height="8"/><rect x="278" y="208" width="10" height="7"/></g>

   <!-- font group -->
   <rect x="332.500" y="170.500" width="108" height="21.500" fill="#f2f2f1" stroke="#b1c4e0" stroke-width="1"/>
   <rect x="441.500" y="170.500" width="41" height="21.500" fill="#f2f2f1" stroke="#b1c4e0" stroke-width="1"/>
   <path d="M429.500 179.500h6l-3 3.500zM470.500 179.500h6l-3 3.500z" fill="#9aa3b3"/>
   <rect x="486.500" y="170.500" width="46.500" height="21.500" rx="2.500" fill="url(#bf)" stroke="#a9bfe0"/>
   <rect x="536.500" y="170.500" width="25" height="21.500" rx="2.500" fill="url(#bf)" stroke="#a9bfe0"/>
   <rect x="332.500" y="200.500" width="189" height="21.500" rx="2.500" fill="url(#bf)" stroke="#a9bfe0"/>
   <rect x="525.500" y="200.500" width="36" height="21.500" rx="2.500" fill="url(#bf)" stroke="#a9bfe0"/>
   <path d="M356.500 201v21M381.500 201v21M405.500 201v21M431.500 201v21M456.500 201v21M488.500 201v21M509.500 171v21" stroke="#c4d4ea" stroke-width="1"/>
   <g font-family="Liberation Serif, serif" fill="#60708c">
    <text x="344.500" y="216.500" text-anchor="middle" font-size="15" font-weight="bold">Ж</text>
    <text x="368" y="216.500" text-anchor="middle" font-size="15" font-weight="bold" font-style="italic">К</text>
    <text x="393" y="215.500" text-anchor="middle" font-size="14.500" text-decoration="underline">Ч</text>
    <text x="419" y="216" text-anchor="middle" font-size="12.500" text-decoration="line-through">abe</text>
    <text x="443.500" y="216.500" text-anchor="middle" font-size="14.500" font-weight="bold" font-family="Liberation Sans, sans-serif">S</text>
    <text x="469" y="211" text-anchor="middle" font-size="10.500">AV</text>
    <text x="501.500" y="217" text-anchor="middle" font-size="15">Aa</text>
    <text x="538.500" y="217" text-anchor="middle" font-size="18" fill="#8c9ab3">A</text>
    <text x="497" y="189" text-anchor="middle" font-size="17">A</text>
    <text x="519.500" y="189" text-anchor="middle" font-size="13">A</text>
   </g>
   <path d="M462 216h14M462 216l3-2.200M462 216l3 2.200M476 216l-3-2.200M476 216l-3 2.200" stroke="#7787a3" stroke-width="1" fill="none"/>
   <path d="M480 209h4l-2 2.500zM514 209h4l-2 2.500zM553 209.500h5l-2.500 3z" fill="#a6b3c9"/>
   <path d="M502.500 175.500l2.500-3 2.500 3zM523 173h5l-2.500 3z" fill="#7787a3"/>
   <rect x="542" y="173.500" width="11" height="8" fill="#f4f6fb" stroke="#aab4c8" stroke-width=".8"/><text x="547.500" y="180.300" text-anchor="middle" font-size="6.500" font-family="Liberation Sans, sans-serif" fill="#6a7890">Aa</text>
   <path d="M548 186.500l6-6 3.500 3.500-6 6z" fill="#fbfcfe" stroke="#aab4c8" stroke-width=".9"/>
   <path d="M417 236v6" stroke="#aebfdc" stroke-width="1.500"/>

   <!-- paragraph group -->
   <rect x="573.500" y="170.500" width="70" height="21.500" rx="2.500" fill="url(#bf)" stroke="#a9bfe0"/>
   <rect x="647.500" y="170.500" width="46" height="21.500" rx="2.500" fill="url(#bf)" stroke="#a9bfe0"/>
   <rect x="697.500" y="170.500" width="33" height="21.500" rx="2.500" fill="url(#bf)" stroke="#a9bfe0"/>
   <rect x="573.500" y="200.500" width="97" height="21.500" rx="2.500" fill="url(#bf)" stroke="#a9bfe0"/>
   <rect x="674.500" y="200.500" width="33" height="21.500" rx="2.500" fill="url(#bf)" stroke="#a9bfe0"/>
   <path d="M608.500 171v21M670.500 171v21M597.500 201v21M621.500 201v21M646.500 201v21" stroke="#c4d4ea" stroke-width="1"/>
   <g stroke="#66758f" stroke-width="1.300" fill="none">
    <path d="M583 176h10M583 181h10M583 186h10"/><path d="M617 176h10M617 181h10M617 186h10"/>
    <path d="M655 175.500h11M658 178.500h8M658 181.500h8M658 184.500h8M655 187.500h11"/>
    <path d="M678 175.500h11M681 178.500h8M681 181.500h8M681 184.500h8M678 187.500h11"/>
    <path d="M709 176h9M709 179.500h9M709 183h9M709 186.500h9"/>
    <path d="M579 205.500h13M579 208.500h9M579 211.500h13M579 214.500h9M579 217.500h13"/>
    <path d="M603 205.500h13M605 208.500h9M603 211.500h13M605 214.500h9M603 217.500h13"/>
    <path d="M627 205.500h13M631 208.500h9M627 211.500h13M631 214.500h9M627 217.500h13"/>
    <path d="M652 205.500h13M652 208.500h13M652 211.500h13M652 214.500h13M652 217.500h13"/>
    <path d="M679 205.500h6M687 205.500h6M679 208.500h6M687 208.500h6M679 211.500h6M687 211.500h6M679 214.500h6M687 214.500h6M679 217.500h6M687 217.500h6"/>
   </g>
   <g fill="#7d8ba5"><circle cx="579.500" cy="176" r="1"/><circle cx="579.500" cy="181" r="1"/><circle cx="579.500" cy="186" r="1"/><rect x="612.500" y="174.500" width="1.500" height="3"/><rect x="612.500" y="179.500" width="1.500" height="3"/><rect x="612.500" y="184.500" width="1.500" height="3"/>
    <path d="M656.500 179.500v5l-3-2.500zM677 179.500v5l3-2.500zM704 173.500l2.500 3.500h-5zM704 189.500l2.500-3.500h-5z"/><path d="M704 176v11" stroke="#7d8ba5" stroke-width="1"/></g>
   <path d="M599.500 179.500h5l-2.500 3zM633.500 179.500h5l-2.500 3zM720.500 179.500h5l-2.500 3zM697.500 209.500h5l-2.500 3z" fill="#a6b3c9"/>
   <g opacity=".55" fill="none" stroke="#e9f0fa" stroke-width="1.200"><rect x="755" y="171" width="20" height="14"/><rect x="787" y="171" width="18" height="16"/><rect x="817" y="172" width="13" height="12"/><rect x="765" y="207" width="13" height="9"/><rect x="795" y="209" width="12" height="9"/><rect x="819" y="208" width="13" height="8"/><path d="M842 212h9"/></g>

   <!-- drawing group : shapes gallery -->
   <rect x="926.500" y="165.500" width="142" height="61" fill="#dbe8f9" stroke="#c3d5ee" stroke-width="1"/>
   <rect x="1055.500" y="165.500" width="13" height="20" fill="#e8eef8" stroke="#c3d5ee"/><rect x="1055.500" y="185.500" width="13" height="20" fill="#dde8f8" stroke="#c3d5ee"/><rect x="1055.500" y="205.500" width="13" height="21" fill="#dde8f8" stroke="#c3d5ee"/>
   <path d="M1059 177.500h6l-3-3.500z" fill="#b4bfd2"/><path d="M1059 194h6l-3 3.500z" fill="#7c8aa6"/><path d="M1058.500 212.500h7" stroke="#7c8aa6" stroke-width="1.200"/><path d="M1059 215h6l-3 3.500z" fill="#7c8aa6"/>
   <g fill="none" stroke="#56627a" stroke-width="1.150" stroke-linejoin="round">
    <rect x="929.500" y="167.500" width="15" height="13" fill="#f2f5fa"/><path d="M932 177h10" stroke-width="1"/>
    <path d="M951 168l14 14"/><path d="M972 168l13 13"/>
    <rect x="992.500" y="169.500" width="15.500" height="11" fill="#e9f0fa"/>
    <ellipse cx="1021" cy="175" rx="7.800" ry="5.800" fill="#e9f0fa"/>
    <rect x="1034.500" y="169.500" width="15.500" height="11" rx="3" fill="#e9f0fa"/>
    <path d="M938 189.500l6.500 12.500h-13z" fill="#e9f0fa"/>
    <path d="M950 190.500h7v11h8"/><path d="M971 190.500h7v11h8"/>
    <path d="M992.500 192.500h8v-3.500l7 6.500-7 6.500v-3.500h-8z" fill="#e9f0fa"/>
    <path d="M1018 188.500h6v7h3.500l-6.500 7.500-6.500-7.500h3.500z" fill="#e9f0fa"/>
    <path d="M1035.500 200.500v-5c1-3 3-4.500 6-4.500s4 1.500 4.500 3c2.500 0 4 1.500 4 3.500 0 1.500-1.500 3-3 3z" fill="#e9f0fa"/>
    <path d="M938 209.500c-3 1-3.500 3-1.500 4.500l5 3c1.500 1.500-.5 3.500-2.500 2.500-1.500-1-.5-2.500 1-2l-1 6"/>
    <path d="M951 211c7 0 12 4 14 11"/>
    <path d="M971 219c3-12 7-12 10-2s6 5 7 3"/>
    <path d="M1002.500 209.500c-3 0-3 1.500-3 3.500v1.500c0 1.500-.5 2.500-2.500 2.500 2 0 2.500 1 2.500 2.500v1.500c0 2 0 3.500 3 3.500"/>
    <path d="M1018 209.500c3 0 3 1.500 3 3.500v1.500c0 1.500.5 2.500 2.500 2.500-2 0-2.500 1-2.500 2.500v1.500c0 2 0 3.500-3 3.500"/>
    <path d="M1042 209l2.200 5.500 5.800.3-4.600 3.600 1.600 5.600-5-3.200-5 3.200 1.600-5.600-4.600-3.600 5.800-.3z" fill="#eef3fb"/>
   </g>
   <path d="M981.500 177.500l4.500 4.500-1-5.500zM983 206l4.500-2.500-4.500-2.500z" fill="#4c5a70"/>
   <rect x="932" y="170" width="4" height="3.500" fill="#333"/>
   <!-- arrange -->
   <rect x="1104" y="173" width="14" height="14" fill="#f4d96a" stroke="#d9b83a"/>
   <rect x="1096.500" y="164.500" width="12" height="12" fill="#d8dce6" stroke="#7a8296" stroke-width="1.200"/>
   <rect x="1113.500" y="181.500" width="13.500" height="15" fill="#dfe2ea" stroke="#7a8296" stroke-width="1.200"/>
   <path d="M1114 196.500h13M1127 182v14.500" stroke="#555d70" stroke-width="1.600"/>
   <!-- quick styles -->
   <path d="M1184.500 170.500c0-3 2-5 5-5h18c3 0 5 2 5 5v15c0 8-8 14-16 15-6 0-12-4-12-12z" fill="#dfe8f6" stroke="#c1cde2" stroke-width="1.200"/>
   <path d="M1197 196l4-8 12-12 1.500 1.500-11 13z" fill="#c9d2e2" stroke="#aab6cc" stroke-width=".8"/>
   <path d="M1194 199c1-3 3-5 6-5l2 2c-1 3-4 4-8 3z" fill="#a9b6cc"/>
   <!-- quick access toolbar -->
   <path d="M109 106.5 H229 a11.3 11.3 0 0 1 0 22.6 H118.5 c-1.5-8-4.5-16-9.5-22.6z" fill="#f1f3f7" stroke="#a7aebb" stroke-width="1"/>
   <!-- office button -->
   <defs><linearGradient id="obg" x1="0" y1="0" x2="0" y2="1"><stop offset="0" stop-color="#e9edf3"/><stop offset=".45" stop-color="#d3d9e4"/><stop offset=".52" stop-color="#c9d0dd"/><stop offset=".7" stop-color="#e6eaf1"/><stop offset="1" stop-color="#fbfcfd"/></linearGradient>
   <linearGradient id="lr" x1="0" y1="0" x2="1" y2="1"><stop offset="0" stop-color="#cf3a14"/><stop offset="1" stop-color="#ea7a2c"/></linearGradient>
   <linearGradient id="ly" x1="0" y1="0" x2="0" y2="1"><stop offset="0" stop-color="#f8cf4a"/><stop offset="1" stop-color="#ee9412"/></linearGradient>
   <linearGradient id="lg" x1="0" y1="0" x2="0" y2="1"><stop offset="0" stop-color="#7cc05a"/><stop offset="1" stop-color="#3f8a28"/></linearGradient></defs>
   <circle cx="93.200" cy="128" r="19.200" fill="url(#obg)" stroke="#959db0" stroke-width="1.500"/>
   <circle cx="93.200" cy="128" r="17.300" fill="none" stroke="#fff" stroke-width="1.200" opacity=".75"/>
   <g>
    <rect x="82.700" y="117.200" width="9.600" height="9.600" rx="2.200" fill="#eef0f4" stroke="url(#lr)" stroke-width="2.800"/>
    <rect x="96.400" y="122.100" width="4.900" height="4.700" rx="1.200" fill="#e8eef6" stroke="#2f7fd0" stroke-width="2.200"/>
    <rect x="83.200" y="130" width="11.100" height="10.600" rx="2.600" fill="url(#ly)"/>
    <rect x="94.700" y="129.700" width="9.900" height="9" rx="2.300" fill="url(#lg)"/>
    <path d="M98.400 123.500v11M88.500 134.200h11" stroke="#fff" stroke-width="1.300" opacity=".9"/>
    <rect x="86.500" y="133" width="4.500" height="3.500" rx="1" fill="#fff" opacity=".75"/><circle cx="98.400" cy="134.200" r="1.300" fill="#fff"/>
   </g>
   <!-- save -->
   <rect x="125" y="111" width="15" height="14.5" rx="1" fill="url(#sv)"/>
   <rect x="128" y="112" width="9" height="6" fill="#e9ecfa"/>
   <rect x="129" y="120.5" width="7" height="5" fill="#1d1d66"/><rect x="133.5" y="121.3" width="1.8" height="3.4" fill="#e9ecfa"/>
   <!-- undo / redo (disabled) -->
   <path d="M150 116.5c3-3.5 8-3.5 10.5-.5 2.5 3 1.500 8-3.500 11" fill="none" stroke="#9dafcd" stroke-width="2.6" stroke-linecap="round"/>
   <path d="M148.200 112.500v6.500h6.500z" fill="#9dafcd"/>
   <path d="M168.500 116.300h5l-2.500 3z" fill="#a9b6cc"/>
   <path d="M186.500 114.500a5.600 5.600 0 1 0 7 .2" fill="none" stroke="#9dafcd" stroke-width="2.600" stroke-linecap="round"/>
   <path d="M190.500 111.500h5.500v5.500z" fill="#9dafcd"/>
   <!-- slideshow from start -->
   <path d="M204 111h12l3 4h-12z" fill="#b9c3d6"/><rect x="209" y="115" width="12" height="11" fill="#dfe5f0" stroke="#b4bfd2" stroke-width="1"/>
   <path d="M211 119h8M211 122h8M215 117v7" stroke="#c2ccdc" stroke-width="1"/>
   <path d="M223.500 116.300h5l-2.500 3z" fill="#a9b6cc"/>
   <!-- customise qat -->
   <path d="M248.500 113.500h5" stroke="#2a3f8a" stroke-width="1.400"/><path d="M248 116.300h6l-3 3.700z" fill="#2a3f8a"/>
   <!-- window buttons -->
   <path d="M1376 117.600h11" stroke="#333" stroke-width="1.100"/>
   <path d="M1423.500 114.500h7.500v7.500h-7.500z M1425.500 114.500v-2h7.500v7.500h-2" fill="none" stroke="#333" stroke-width="1.100"/>
   <path d="M1471.500 112.500l10 10M1481.500 112.500l-10 10" stroke="#333" stroke-width="1.200"/>
   <!-- help -->
   <circle cx="1491.500" cy="143.500" r="6.800" fill="#3f6fd0" stroke="#9fb6e6" stroke-width="1.200"/>
   <text x="1491.500" y="147.600" text-anchor="middle" font-family="Liberation Sans, sans-serif" font-weight="bold" font-size="11" fill="#fff">?</text>
  </svg>
</div>

<div class="abs" style="left:0;top:801px;width:1568px;height:6px;background:#000"></div>
</div>
</body>
</html>
